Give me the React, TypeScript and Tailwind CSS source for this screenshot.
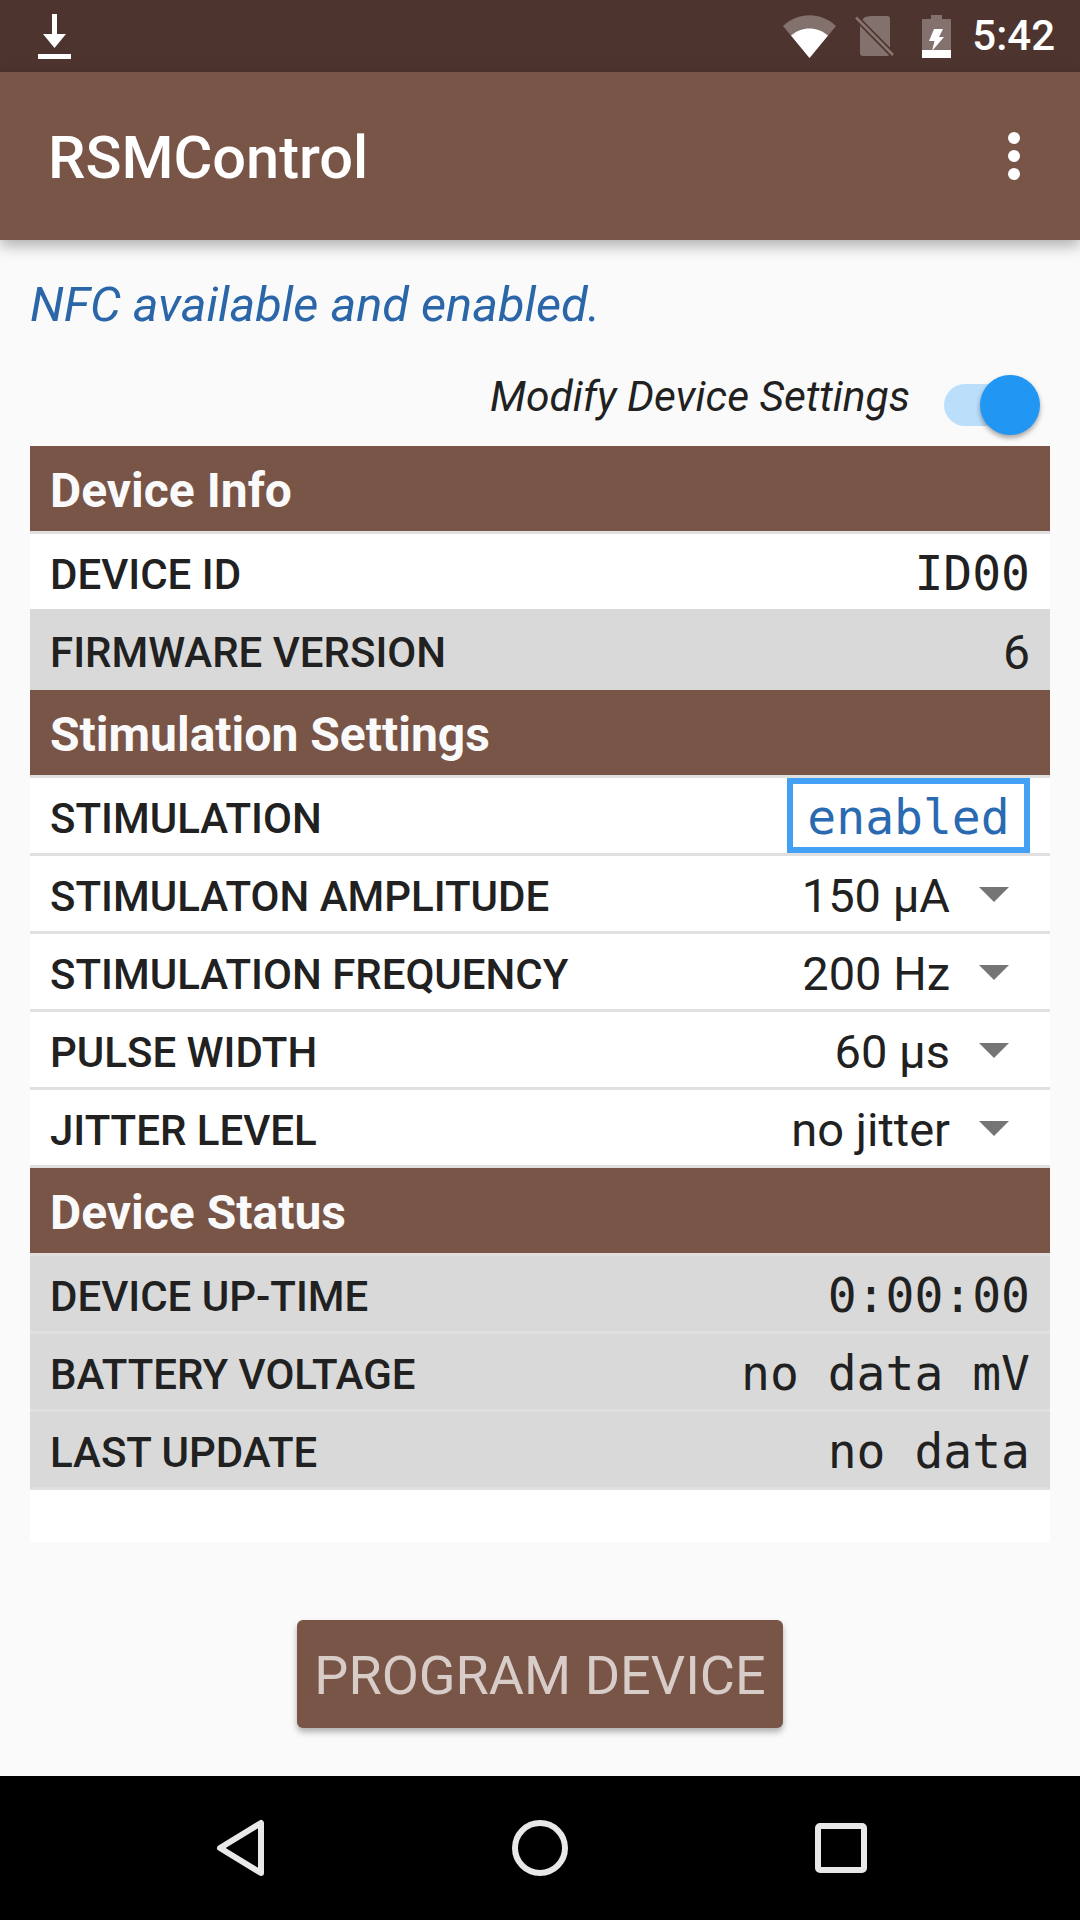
import React from 'react';

const roboto = "font-['Roboto',sans-serif]";
const mono = "font-['DejaVu_Sans_Mono',monospace]";

function SectionHeader({ title }: { title: string }) {
  return (
    <div className="flex h-[85px] items-center bg-[#795548] pl-[20px]">
      <span className="pt-[4px] text-[48px] font-bold leading-none text-[#fafafa]">{title}</span>
    </div>
  );
}

function Caret() {
  return (
    <svg width="30" height="15" viewBox="0 0 30 15" className="ml-[29px] mr-[21px] mt-[2px]">
      <polygon points="0,0 30,0 15,15" fill="#757575" />
    </svg>
  );
}

function Row({ label, children, gray, h = 'h-[75px]' }: { label: string; children: React.ReactNode; gray?: boolean; h?: string }) {
  return (
    <div className={`flex ${h} items-center justify-between pl-[20px] pr-[20px] ${gray ? 'bg-[#d9d9d9]' : 'bg-white'}`}>
      <span className="pt-[6px] text-[42px] font-medium leading-none text-[#212121]">{label}</span>
      {children}
    </div>
  );
}

function Divider() {
  return <div className="h-[3px] bg-[#e0e0e0]" />;
}

function MonoValue({ children }: { children: React.ReactNode }) {
  return <span className={`${mono} pt-[3px] text-[48px] leading-none text-[#212121]`}>{children}</span>;
}

function SelectValue({ children }: { children: React.ReactNode }) {
  return (
    <div className="flex items-center">
      <span className="pt-[4px] text-[47px] leading-none text-[#212121]">{children}</span>
      <Caret />
    </div>
  );
}

export default function App() {
  return (
    <div className={`flex h-[1920px] w-[1080px] flex-col overflow-hidden bg-[#fafafa] ${roboto}`}>
      {/* Status bar */}
      <div className="flex h-[72px] shrink-0 items-center bg-[#4e342e] pl-[38px] pr-[25px]">
        <svg width="33" height="45" viewBox="0 0 33 45" className="mt-[1px]">
          <rect x="14" y="0" width="5" height="24" fill="#fff" />
          <polygon points="5,20 28,20 16.5,34" fill="#fff" />
          <rect x="0" y="40" width="33" height="5" fill="#fff" />
        </svg>
        <div className="ml-auto flex items-center">
          <svg width="53" height="43" viewBox="0 0 53 43">
            <path d="M0 11 C15 -3.500 38 -3.500 53 11 L26.500 43 Z" fill="#fff" fillOpacity="0.3" />
            <path d="M8 20.500 C19 11 34 11 45 20.500 L26.500 43 Z" fill="#fff" />
          </svg>
          <svg width="40" height="42" viewBox="0 0 40 42" className="ml-[19px]">
            <path d="M10 2 L5 7 V38 a3 3 0 0 0 3 3 H32 a3 3 0 0 0 3 -3 V4 a3 3 0 0 0 -3 -3 H16 Z" fill="#fff" fillOpacity="0.3" />
            <line x1="1" y1="2.500" x2="38" y2="40" stroke="#4e342e" strokeWidth="6" />
            <line x1="1" y1="2.500" x2="38" y2="40" stroke="#887570" strokeWidth="2.500" />
          </svg>
          <svg width="29" height="43" viewBox="0 0 29 43" className="ml-[27px]">
            <path d="M9 0 H20 V4 H29 V43 H0 V4 H9 Z" fill="#fff" fillOpacity="0.3" />
            <path d="M0 35 H29 V43 H0 Z" fill="#fff" />
            <polygon points="12,14 21,14 17,22 22,22 10,36 12.500,26 7,26" fill="#fff" />
          </svg>
          <span className="ml-[21px] text-[42px] font-medium leading-none text-white">5:42</span>
        </div>
      </div>

      {/* App bar */}
      <div className="relative z-10 flex h-[168px] shrink-0 items-center justify-between bg-[#795548] pl-[48px] pr-[60px] shadow-[0_6px_14px_rgba(0,0,0,0.3)]">
        <span className="pt-[6px] text-[59.5px] font-medium leading-none text-white">RSMControl</span>
        <div className="flex flex-col gap-[6px]">
          <div className="h-[12px] w-[12px] rounded-full bg-white" />
          <div className="h-[12px] w-[12px] rounded-full bg-white" />
          <div className="h-[12px] w-[12px] rounded-full bg-white" />
        </div>
      </div>

      {/* Content */}
      <div className="flex flex-1 flex-col px-[30px]">
        <p className="mt-[37px] text-[48.8px] italic leading-[56px] text-[#2a66a8]">NFC available and enabled.</p>
        <div className="mb-[8px] mt-[39px] flex h-[66px] items-center justify-end">
          <span className="pb-[16px] text-[42.5px] italic leading-none text-[#212121]">Modify Device Settings</span>
          <div className="relative ml-[34px] mr-[20px] h-[42px] w-[86px] rounded-full bg-[#bbdefb]">
            <div className="absolute right-[-10px] top-[-9px] h-[60px] w-[60px] rounded-full bg-[#2196f3] shadow-[0_3px_5px_rgba(0,0,0,0.35)]" />
          </div>
        </div>

        <div className="bg-white">
          <SectionHeader title="Device Info" />
          <Divider />
          <Row label="DEVICE ID">
            <MonoValue>ID00</MonoValue>
          </Row>
          <Row label="FIRMWARE VERSION" gray h="h-[81px]">
            <span className="pt-[6px] text-[48px] leading-none text-[#212121]">6</span>
          </Row>
          <SectionHeader title="Stimulation Settings" />
          <Divider />
          <Row label="STIMULATION">
            <div className="flex h-[75px] w-[243px] items-center justify-center border-[6px] border-[#42a0f5]">
              <span className={`${mono} pt-[2px] text-[48px] leading-none text-[#2a6ab0]`}>enabled</span>
            </div>
          </Row>
          <Divider />
          <Row label="STIMULATON AMPLITUDE">
            <SelectValue>150 µA</SelectValue>
          </Row>
          <Divider />
          <Row label="STIMULATION FREQUENCY">
            <SelectValue>200 Hz</SelectValue>
          </Row>
          <Divider />
          <Row label="PULSE WIDTH">
            <SelectValue>60 µs</SelectValue>
          </Row>
          <Divider />
          <Row label="JITTER LEVEL">
            <SelectValue>no jitter</SelectValue>
          </Row>
          <Divider />
          <SectionHeader title="Device Status" />
          <Divider />
          <Row label="DEVICE UP-TIME" gray>
            <MonoValue>0:00:00</MonoValue>
          </Row>
          <Divider />
          <Row label="BATTERY VOLTAGE" gray>
            <MonoValue>no data mV</MonoValue>
          </Row>
          <Divider />
          <Row label="LAST UPDATE" gray>
            <MonoValue>no data</MonoValue>
          </Row>
          <Divider />
          <div className="h-[52px]" />
        </div>

        <div className="mt-[78px] flex justify-center">
          <button className="h-[108px] w-[486px] rounded-[6px] bg-[#795548] pt-[4px] text-[54px] leading-none text-[#d7ccc8] shadow-[0_4px_6px_rgba(0,0,0,0.3)]">
            PROGRAM DEVICE
          </button>
        </div>
      </div>

      {/* Navigation bar */}
      <div className="relative flex h-[144px] shrink-0 items-center bg-black">
        <svg width="1080" height="144" viewBox="0 0 1080 144">
          <path d="M261 47 V97 L220 72 Z" fill="none" stroke="#e8e8e8" strokeWidth="6" strokeLinejoin="round" />
          <circle cx="540" cy="72" r="25" fill="none" stroke="#e8e8e8" strokeWidth="6" />
          <rect x="818" y="50" width="46" height="44" rx="2" fill="none" stroke="#e8e8e8" strokeWidth="6" />
        </svg>
      </div>
    </div>
  );
}
